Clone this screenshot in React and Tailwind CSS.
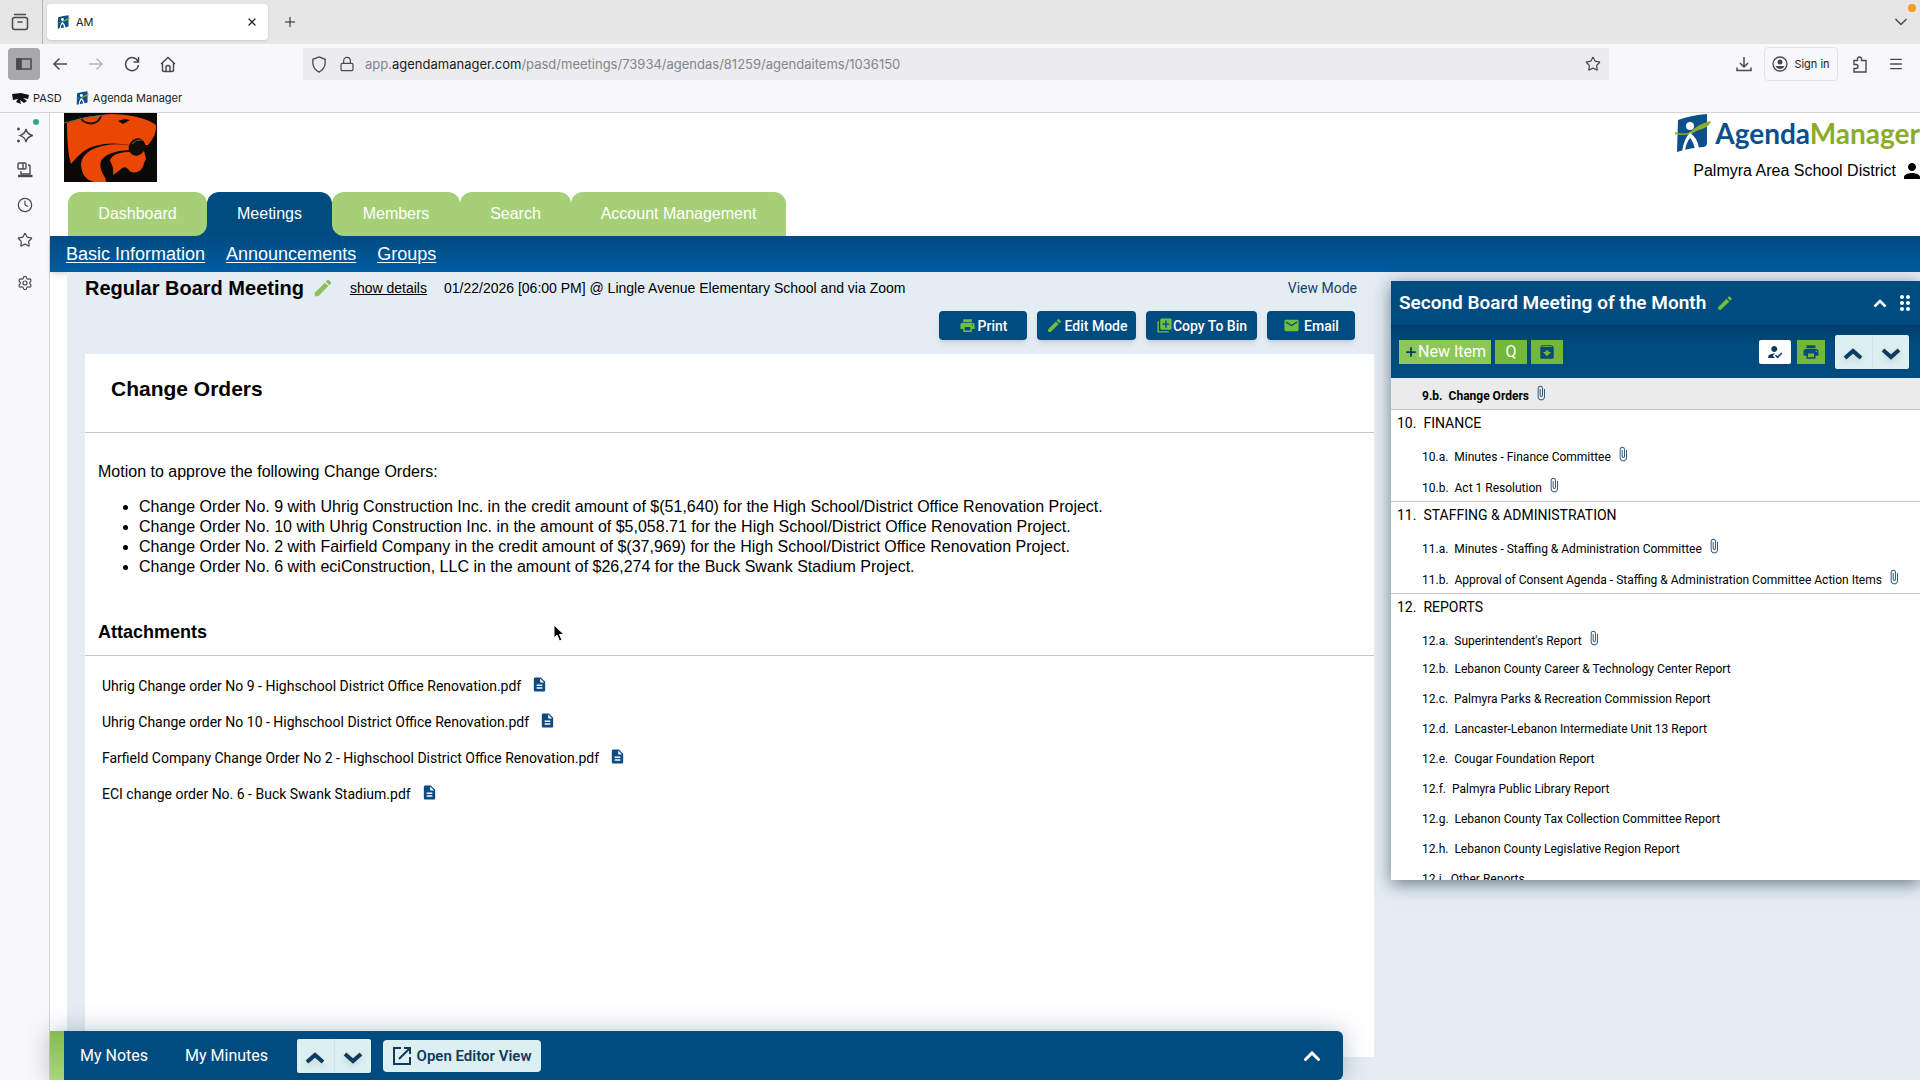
import {
  MdArchive,
  MdAttachFile,
  MdDescription,
  MdDragIndicator,
  MdEdit,
  MdEmail,
  MdHowToReg,
  MdLibraryAdd,
  MdPerson,
  MdPrint,
} from "react-icons/md";
import { Clock, Lock, Menu, Plus, Settings, Star, X } from "lucide-react";

const tabs = [
  { label: "Dashboard", className: "w-[139px] rounded-br-xl" },
  { label: "Meetings", className: "w-[125px]", active: true },
  { label: "Members", className: "w-[128px] rounded-bl-xl" },
  { label: "Search", className: "w-[111px]" },
  { label: "Account Management", className: "w-[215px]" },
];

const orders = [
  "Change Order No. 9 with Uhrig Construction Inc. in the credit amount of $(51,640) for the High School/District Office Renovation Project.",
  "Change Order No. 10 with Uhrig Construction Inc. in the amount of $5,058.71 for the High School/District Office Renovation Project.",
  "Change Order No. 2 with Fairfield Company in the credit amount of $(37,969) for the High School/District Office Renovation Project.",
  "Change Order No. 6 with eciConstruction, LLC in the amount of $26,274 for the Buck Swank Stadium Project.",
];

const attachments = [
  "Uhrig Change order No 9 - Highschool District Office Renovation.pdf",
  "Uhrig Change order No 10 - Highschool District Office Renovation.pdf",
  "Farfield Company Change Order No 2 - Highschool District Office Renovation.pdf",
  "ECI change order No. 6 - Buck Swank Stadium.pdf",
];

const sections = [
  {
    no: "10.",
    title: "FINANCE",
    items: [
      { no: "10.a.", title: "Minutes - Finance Committee", clip: true },
      { no: "10.b.", title: "Act 1 Resolution", clip: true },
    ],
  },
  {
    no: "11.",
    title: "STAFFING & ADMINISTRATION",
    items: [
      { no: "11.a.", title: "Minutes - Staffing & Administration Committee", clip: true },
      {
        no: "11.b.",
        title: "Approval of Consent Agenda - Staffing & Administration Committee Action Items",
        clip: true,
      },
    ],
  },
  {
    no: "12.",
    title: "REPORTS",
    items: [
      { no: "12.a.", title: "Superintendent's Report", clip: true },
      { no: "12.b.", title: "Lebanon County Career & Technology Center Report" },
      { no: "12.c.", title: "Palmyra Parks & Recreation Commission Report" },
      { no: "12.d.", title: "Lancaster-Lebanon Intermediate Unit 13 Report" },
      { no: "12.e.", title: "Cougar Foundation Report" },
      { no: "12.f.", title: "Palmyra Public Library Report" },
      { no: "12.g.", title: "Lebanon County Tax Collection Committee Report" },
      { no: "12.h.", title: "Lebanon County Legislative Region Report" },
      { no: "12.i.", title: "Other Reports" },
    ],
  },
];

function AgendaMark({ className }) {
  return (
    <svg viewBox="0 0 36 38" className={className} aria-hidden="true">
      <path d="M3 6 Q17 1 32 0 V30 Q31 33 28 33 Q14 34 2 38 Z" fill="#0b4f8c" />
      <path d="M0 18 Q9 21 15 18 Q25 9 36 7 Q35 12 27 15 Q20 17 17 20 Q6 22 0 20Z" fill="#8aac2c" />
      <circle cx="15" cy="12" r="4" fill="#fff" />
      <path d="M7 38 Q9 24 15 19 Q22 23 24 34 L20 35 Q18 27 15 24 Q11 29 10 37Z" fill="#fff" />
    </svg>
  );
}

function CougarLogo() {
  return (
    <svg viewBox="0 0 93 69" className="h-[69px] w-[93px]" role="img" aria-label="Cougar logo">
      <rect width="93" height="69" fill="#0b0906" />
      <path
        d="M3 10 Q24 2 48 1 Q78 2 92 12 Q93 22 84 32 L66 32 Q36 27 20 38 Q12 44 7 51 Q3 38 3 10Z"
        fill="#ea4704"
      />
      <path
        d="M66 32 Q42 29 27 37 Q17 43 17 52 Q18 66 30 69 H42 Q42 65 39 61 Q35 54 37 48 Q43 38 66 37Z"
        fill="#ea4704"
      />
      <path
        d="M64 39 Q47 40 46 48 Q50 54 49 62 L56 57 Q60 52 64 56 Q67 61 73 59 Q79 57 80 50 L82 46 L80 38Z"
        fill="#ea4704"
      />
      <path d="M15 3 L19 8 Q27 13 34 8 L38 2" fill="none" stroke="#2a1308" strokeWidth="2" />
      <path d="M0 10 Q22 3 44 2" fill="none" stroke="#6b7268" strokeWidth="1" />
      <path d="M54 8 Q60 5 66 7 L59 11Z" fill="#110d0b" />
      <ellipse cx="73" cy="34" rx="8" ry="9" transform="rotate(35 73 34)" fill="#110d0b" />
      <path d="M68 31 Q72 26 78 27" fill="none" stroke="#6b6460" strokeWidth="1" />
    </svg>
  );
}

function Chevron({ down }) {
  return (
    <svg viewBox="0 0 20 14" className="h-3.5 w-5 drop-shadow-md" aria-hidden="true">
      <path
        d={down ? "M2 3 L10 10 L18 3" : "M2 11 L10 4 L18 11"}
        fill="none"
        stroke="#0d3b60"
        strokeWidth="4"
      />
    </svg>
  );
}

function UpDown() {
  return (
    <div className="flex h-[34px] w-[74px] items-stretch rounded-xs bg-[#dceff1] shadow-sm">
      <button aria-label="Previous" className="flex flex-1 items-center justify-center border-r border-[#cfe4e8] pt-1">
        <Chevron />
      </button>
      <button aria-label="Next" className="flex flex-1 items-center justify-center pt-1">
        <Chevron down />
      </button>
    </div>
  );
}

function BrowserChrome() {
  return (
    <header className="shrink-0 border-b border-[#d5d5d8] bg-[#f8f8fa] font-[Inter,sans-serif] text-[#222]">
      <div className="flex h-11 items-center bg-[#e6e6e6]">
        <button
          aria-label="Recent browsing"
          className="flex h-full w-[43px] items-center justify-center border-r border-[#b4b4b6] pr-0.5"
        >
          <svg viewBox="0 0 18 18" className="size-[18px]" fill="none" stroke="#4a4a4e" strokeWidth="1.5">
            <path d="M3 1.5 H15" />
            <rect x="1.5" y="4.5" width="15" height="12" rx="2" />
            <path d="M6.5 9 H11.5" />
          </svg>
        </button>
        <div className="ml-1 flex h-9 w-[221px] items-center rounded-sm bg-white px-2.5 shadow">
          <AgendaMark className="h-[14px] w-[13px]" />
          <span className="ml-1.5 flex-1 text-[11px]">AM</span>
          <button aria-label="Close tab">
            <X className="size-3" strokeWidth={2.5} />
          </button>
        </div>
        <button aria-label="New tab" className="ml-3.5">
          <Plus className="size-4" strokeWidth={1.5} />
        </button>
        <button aria-label="List all tabs" className="mr-3 ml-auto">
          <svg viewBox="0 0 14 8" className="h-2 w-3.5" fill="none" stroke="#4a4a4e" strokeWidth="1.5">
            <path d="M1.5 1 L7 6.5 L12.5 1" />
          </svg>
        </button>
        <span className="absolute top-1 right-1 size-2 rounded-full bg-[#f79a28]" />
      </div>

      <div className="flex h-10 items-center pr-4 pl-2 text-[#4a4a4e]">
        <button aria-label="Show sidebar" className="flex size-8 items-center justify-center rounded-sm bg-[#a9a9ac]">
          <svg viewBox="0 0 16 12" className="h-3 w-4" fill="none" stroke="#4a4a4e" strokeWidth="1.5">
            <rect x="1" y="1" width="14" height="10" />
            <path d="M1 1 H5 V11 H1Z" fill="#4a4a4e" />
          </svg>
        </button>
        <button aria-label="Back" className="ml-3 flex w-4 justify-center">
          <svg viewBox="0 0 16 14" className="h-3.5 w-4 shrink-0" fill="none" stroke="currentColor" strokeWidth="1.5">
            <path d="M15 7 H2 M7.5 1.5 L2 7 L7.5 12.5" />
          </svg>
        </button>
        <button aria-label="Forward" className="ml-5 flex w-4 justify-center text-[#b8b8bb]">
          <svg viewBox="0 0 16 14" className="h-3.5 w-4 shrink-0" fill="none" stroke="currentColor" strokeWidth="1.5">
            <path d="M1 7 H14 M8.5 1.5 L14 7 L8.5 12.5" />
          </svg>
        </button>
        <button aria-label="Reload" className="ml-5">
          <svg viewBox="0 0 16 16" className="size-4" fill="none" stroke="currentColor" strokeWidth="1.5">
            <path d="M14 5.5 A6.5 6.5 0 1 0 14.5 9 M14.5 1 V6 H9.5" />
          </svg>
        </button>
        <button aria-label="Home" className="ml-5">
          <svg viewBox="0 0 16 17" className="h-[17px] w-4" fill="none" stroke="currentColor" strokeWidth="1.5">
            <path d="M1 8 L8 1.5 L15 8 M2.5 7 V14 Q2.5 15.5 4 15.5 H12 Q13.5 15.5 13.5 14 V7 M6 15 V11 Q6 9.5 8 9.5 Q10 9.5 10 11 V15" />
          </svg>
        </button>
        <div className="ml-[127px] flex h-8 flex-1 items-center bg-[#ececee] px-2">
          <svg viewBox="0 0 16 18" className="h-[17px] w-4" fill="none" stroke="currentColor" strokeWidth="1.4">
            <path d="M8 1 L14.5 3.5 V8 Q14 14 8 17 Q2 14 1.5 8 V3.5Z" />
          </svg>
          <Lock className="ml-3 size-4" strokeWidth={1.8} />
          <div className="ml-2.5 flex-1 pt-0.5 text-[13px] text-[#85858a]">
            app.<span className="text-[#1c1c20]">agendamanager.com</span>
            /pasd/meetings/73934/agendas/81259/agendaitems/1036150
          </div>
          <button aria-label="Bookmark this page">
            <Star className="size-4" strokeWidth={1.8} />
          </button>
        </div>
        <button aria-label="Downloads" className="ml-[127px]">
          <svg viewBox="0 0 16 16" className="size-4" fill="none" stroke="currentColor" strokeWidth="1.5">
            <path d="M8 1 V11 M4 7 L8 11 L12 7 M1 11.5 V14.5 H15 V11.5" />
          </svg>
        </button>
        <button className="ml-3 flex h-[34px] w-[74px] items-center justify-center gap-1.5 rounded-sm border border-[#e4e4e8] text-[11px] text-[#222]">
          <svg viewBox="0 0 16 16" className="size-4" fill="none" stroke="#4a4a4e" strokeWidth="1.3">
            <circle cx="8" cy="8" r="7" />
            <circle cx="8" cy="6" r="2.5" fill="#4a4a4e" stroke="none" />
            <path d="M3.5 10 H12.5 Q11 13 8 13 Q5 13 3.5 10Z" fill="#4a4a4e" stroke="none" />
          </svg>
          Sign in
        </button>
        <button aria-label="Extensions" className="ml-3.5">
          <svg viewBox="0 0 16 17" className="h-[17px] w-4" fill="none" stroke="currentColor" strokeWidth="1.4">
            <path d="M2 4.5 H5.5 V3 Q5.5 1 7.5 1 Q9.5 1 9.5 3 V4.5 H14 V16 H2 V12.5 H4 Q6 12.5 6 10.5 Q6 8.5 4 8.5 H2Z" />
          </svg>
        </button>
        <button aria-label="Open menu" className="ml-5">
          <Menu className="size-4" strokeWidth={2} />
        </button>
      </div>

      <nav className="flex h-7 items-center pl-3 text-[11px]">
        <a href="#pasd" className="flex items-center gap-1">
          <svg viewBox="0 0 17 11" className="h-[11px] w-[17px]" aria-hidden="true">
            <path d="M0 1 L9 0 L17 2 L16 6 L11 5 L15 8 L12 10 L8 7 L9 11 L4 9 L6 6 L1 7Z" fill="#111" />
          </svg>
          PASD
        </a>
        <a href="#agenda" className="ml-3.5 flex items-center gap-1">
          <AgendaMark className="h-[14px] w-[13px]" />
          Agenda Manager
        </a>
      </nav>
    </header>
  );
}

function SideRail() {
  return (
    <aside className="flex w-[50px] shrink-0 flex-col items-center gap-[19px] border-r border-[#d5d5d8] bg-[#f8f8fa] pt-3.5 text-[#4a4a4e]">
      <button aria-label="AI chatbot" className="relative">
        <svg viewBox="0 0 16 16" className="size-4" fill="none" stroke="currentColor" strokeWidth="1.3">
          <path d="M9 2 Q10 7 15.5 8.5 Q10 10 9 15 Q8 10 3 8.5 Q8 7 9 2Z" />
          <path d="M0 2 H3 M1.5 .5 V3.5 M0 14 H3 M1.5 12.5 V15.5" />
        </svg>
        <span className="absolute -top-2 -right-1.5 size-1.5 rounded-full bg-[#35a584]" />
      </button>
      <button aria-label="Tabs from other devices">
        <svg viewBox="0 0 16 16" className="size-4" fill="none" stroke="currentColor" strokeWidth="1.4">
          <rect x="1" y="1" width="8" height="6" rx="1" />
          <path d="M6 1 V7 M11 3 H12 Q13 3 13 4 V12 H4 V9" />
          <path d="M1 14 H15.5" strokeWidth="2.4" />
        </svg>
      </button>
      <button aria-label="History">
        <Clock className="size-4" strokeWidth={1.8} />
      </button>
      <button aria-label="Bookmarks">
        <Star className="size-4" strokeWidth={1.8} />
      </button>
      <button aria-label="Customize sidebar" className="mt-2">
        <Settings className="size-4" strokeWidth={1.8} />
      </button>
    </aside>
  );
}

function SiteHeader() {
  return (
    <div className="flex h-[123px] shrink-0 justify-between">
      <div className="flex flex-col justify-between">
        <div className="pl-3.5">
          <CougarLogo />
        </div>
        <nav className="flex h-11 pl-[18px] text-base text-white">
          {tabs.map((tab) => (
            <div key={tab.label} className="bg-linear-to-b from-white from-50% to-[#004c80] to-50%">
              <a
                href="#tab"
                className={`flex h-full items-center justify-center rounded-t-xl ${tab.className} ${
                  tab.active ? "bg-[#004c80]" : "bg-[#a5d077]"
                }`}
              >
                {tab.label}
              </a>
            </div>
          ))}
        </nav>
      </div>
      <div className="flex flex-col items-end">
        <div className="flex items-start pt-px">
          <AgendaMark className="h-[38px] w-9" />
          <span className="ml-1 font-[Lato,sans-serif] text-[28px] leading-[38px] font-bold text-[#0b4f8c]">
            Agenda<span className="text-[#8aac2c]">Manager</span>
          </span>
        </div>
        <div className="flex items-center gap-1 text-base leading-[38px]">
          Palmyra Area School District
          <MdPerson className="-mr-1 size-6" />
        </div>
      </div>
    </div>
  );
}

function ActionButton({ icon: Icon, className, children }) {
  return (
    <button
      className={`flex h-[29px] items-center justify-center rounded-sm bg-[#004c80] font-[Roboto,sans-serif] text-sm font-medium text-white shadow-md ${className}`}
    >
      <Icon className="size-[17px] shrink-0 text-[#6fbf3f]" />
      {children}
    </button>
  );
}

function MeetingItem() {
  return (
    <main className="flex min-w-0 flex-1 flex-col pr-[17px] pl-[18px]">
      <div className="flex h-8 items-center">
        <h1 className="text-xl font-bold">Regular Board Meeting</h1>
        <button aria-label="Edit meeting" className="ml-2">
          <MdEdit className="size-[22px] text-[#8cbf54]" />
        </button>
        <a href="#details" className="ml-4 text-sm underline">
          show details
        </a>
        <span className="ml-[17px] text-sm">
          01/22/2026 [06:00 PM] @ Lingle Avenue Elementary School and via Zoom
        </span>
        <span className="mr-[17px] ml-auto font-[Roboto,sans-serif] text-sm text-[#173f66]">View Mode</span>
      </div>
      <div className="mt-[7px] mr-[19px] flex justify-end gap-2.5">
        <ActionButton icon={MdPrint} className="w-[88px] gap-0.5">Print</ActionButton>
        <ActionButton icon={MdEdit} className="w-[99px] gap-0.5">Edit Mode</ActionButton>
        <ActionButton icon={MdLibraryAdd} className="w-[111px]">Copy To Bin</ActionButton>
        <ActionButton icon={MdEmail} className="w-[88px] gap-1">Email</ActionButton>
      </div>

      <article className="mt-3.5 mb-[23px] flex-1 bg-white">
        <h2 className="border-b border-[#c4c6c8] pt-[23px] pb-[31px] pl-[26px] text-[21px] leading-6 font-bold">
          Change Orders
        </h2>
        <div className="pt-[29px] pl-[13px] text-base leading-5">
          <p>Motion to approve the following Change Orders:</p>
          <ul className="mt-[15px] list-disc pl-[41px]">
            {orders.map((order) => (
              <li key={order}>{order}</li>
            ))}
          </ul>
        </div>
        <h3 className="mt-[43px] border-b border-[#c4c6c8] pb-[11px] pl-[13px] text-lg leading-6 font-bold">
          Attachments
        </h3>
        <ul className="pt-3 pl-[17px] font-[Roboto,sans-serif] text-sm">
          {attachments.map((name) => (
            <li key={name} className="flex h-9 items-center gap-2.5">
              <a href="#file">{name}</a>
              <MdDescription className="mb-1 size-[17px] text-[#0b4a82]" />
            </li>
          ))}
        </ul>
      </article>
    </main>
  );
}

function AgendaItem({ item, active }) {
  return (
    <li
      className={`flex items-center pl-[31px] text-xs ${item.clip ? "h-[31px] pt-1" : "h-[30px]"} ${
        active ? "bg-[#ebebec] font-bold" : ""
      }`}
    >
      <a href="#item" className="whitespace-nowrap">
        {item.no}&nbsp; {item.title}
      </a>
      {item.clip && <MdAttachFile className="mb-1.5 ml-1 size-4 shrink-0 text-[#2c5d82]" />}
    </li>
  );
}

function AgendaPanel() {
  return (
    <aside className="mt-[9px] w-[529px] shrink-0 self-start bg-white font-[Roboto,sans-serif] shadow-[0_4px_16px_rgba(30,50,70,0.6)]">
      <div className="bg-[#004c80] text-white">
        <div className="flex h-11 items-center pl-2">
          <h2 className="text-[19px] font-semibold">Second Board Meeting of the Month</h2>
          <button aria-label="Edit title" className="ml-2.5">
            <MdEdit className="size-[18px] text-[#6fbf3f]" />
          </button>
          <button aria-label="Collapse" className="mr-1.5 ml-auto">
            <svg viewBox="0 0 14 9" className="h-[9px] w-3.5" fill="none" stroke="currentColor" strokeWidth="2.5">
              <path d="M1.5 7.5 L7 2 L12.5 7.5" />
            </svg>
          </button>
          <button aria-label="Move panel" className="mr-[3px]">
            <MdDragIndicator className="size-6" />
          </button>
        </div>
        <div className="flex h-[53px] items-center bg-linear-to-b from-[#003e6b] to-[#004c80] to-40% pl-2">
          <button className="flex h-6 w-[92px] items-center justify-center bg-[#8cc855] text-base">
            <Plus className="size-3.5 text-[#0d3b60]" strokeWidth={3} />
            New Item
          </button>
          <button aria-label="Quick item" className="ml-1 h-6 w-8 bg-[#74b83a] text-base">
            Q
          </button>
          <button aria-label="Item bin" className="ml-1 flex h-6 w-8 items-center justify-center bg-[#74b83a]">
            <MdArchive className="size-[18px] text-[#0d4a78]" />
          </button>
          <button aria-label="Attendance" className="ml-auto flex h-6 w-8 items-center justify-center rounded-xs bg-white">
            <MdHowToReg className="size-[18px] text-[#0d3b60]" />
          </button>
          <button aria-label="Print agenda" className="mr-2.5 ml-1.5 flex h-6 w-7 items-center justify-center bg-[#74b83a]">
            <MdPrint className="size-[18px] text-[#0d4a78]" />
          </button>
          <div className="mr-[11px]">
            <UpDown />
          </div>
        </div>
      </div>
      <div className="h-[502px] overflow-y-hidden">
        <ul className="border-b border-[#c4c6c8]">
          <AgendaItem item={{ no: "9.b.", title: "Change Orders", clip: true }} active />
        </ul>
        {sections.map((section) => (
          <section key={section.no} className="border-b border-[#c4c6c8]">
            <h3 className="h-[29px] pl-1.5 text-sm leading-[26px]">
              {section.no}&nbsp; {section.title}
            </h3>
            <ul>
              {section.items.map((item) => (
                <AgendaItem key={item.no} item={item} />
              ))}
            </ul>
          </section>
        ))}
      </div>
    </aside>
  );
}

function BottomBar() {
  return (
    <footer className="absolute right-[577px] bottom-0 left-[50px] flex h-[49px] items-center rounded-r-md bg-[#004c80] pt-px font-[Roboto,sans-serif] text-base text-white shadow-[0_0_24px_rgba(60,80,100,0.35)]">
      <span className="-mt-px mr-4 w-3.5 self-stretch bg-linear-to-b from-[#84bd48] to-[#a9d67c]" />
      <button>My Notes</button>
      <button className="mr-[29px] ml-[37px]">My Minutes</button>
      <UpDown />
      <button className="ml-3 flex h-8 w-[158px] items-center justify-center gap-1.5 rounded-sm bg-[#dceff1] text-[15px] font-semibold text-[#0d3b60]">
        <svg viewBox="0 0 18 18" className="size-[18px]" fill="none" stroke="currentColor" strokeWidth="2">
          <path d="M8 1 H1 V17 H17 V10 M11 1 H17 V7 M17 1 L6 12" />
        </svg>
        Open Editor View
      </button>
      <button aria-label="Expand notes" className="mr-[23px] ml-auto">
        <svg viewBox="0 0 16 10" className="h-2.5 w-4" fill="none" stroke="currentColor" strokeWidth="3">
          <path d="M1.5 8.5 L8 2 L14.5 8.5" strokeLinecap="round" />
        </svg>
      </button>
    </footer>
  );
}

export default function App() {
  return (
    <div className="relative flex h-screen flex-col overflow-hidden bg-white font-['Liberation_Sans',Arial,sans-serif] text-black">
      <BrowserChrome />
      <div className="flex min-h-0 flex-1">
        <SideRail />
        <div className="flex min-w-0 flex-1 flex-col">
          <SiteHeader />
          <nav className="flex h-9 shrink-0 items-center gap-[21px] bg-linear-to-b from-[#004c80] to-[#005ca2] pl-4 text-lg text-white shadow-md">
            <a href="#basic" className="underline underline-offset-2">Basic Information</a>
            <a href="#announcements" className="underline underline-offset-2">Announcements</a>
            <a href="#groups" className="underline underline-offset-2">Groups</a>
          </nav>
          <div className="ml-[17px] flex min-h-0 flex-1 bg-[#e4ecf4]">
            <MeetingItem />
            <AgendaPanel />
          </div>
        </div>
      </div>
      <BottomBar />
      <svg viewBox="0 0 12 18" className="absolute top-[624px] left-[553px] h-[18px] w-3" aria-hidden="true">
        <path d="M1 1 V14 L4 11 L6.5 17 L9 16 L6.5 10.5 H11Z" fill="#000" stroke="#fff" />
      </svg>
    </div>
  );
}
